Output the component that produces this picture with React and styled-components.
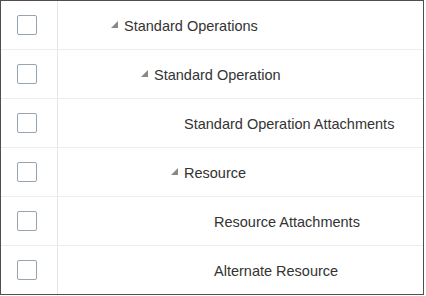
import React from 'react';
import styled, { createGlobalStyle } from 'styled-components';

const Global = createGlobalStyle`
  body {
    margin: 0;
    background: #fff;
    font-family: "Liberation Sans", Arial, sans-serif;
  }
`;

const Frame = styled.div`
  width: 424px;
  height: 295px;
  box-sizing: border-box;
  border: 1px solid #4f4f4f;
  background: #fff;
  overflow: hidden;
`;

const Row = styled.div`
  display: flex;
  height: 49px;
  box-sizing: border-box;
  border-bottom: 1px solid #ececec;
  &:last-child {
    border-bottom: none;
    height: 48px;
  }
`;

const SelectCell = styled.div`
  width: 57px;
  flex: none;
  box-sizing: border-box;
  border-right: 1px solid #e0e6eb;
  display: flex;
  align-items: center;
  padding-left: 16px;
`;

const Checkbox = styled.span`
  width: 20px;
  height: 20px;
  box-sizing: border-box;
  border: 1.5px solid #97a4b0;
  border-radius: 2px;
  background: #fff;
`;

const NameCell = styled.div`
  flex: 1;
  display: flex;
  align-items: center;
  padding-left: ${p => 48 + p.$level * 30}px;
  padding-top: 2px;
  font-size: 14.5px;
  color: #333;
  white-space: nowrap;
`;

const Expander = styled.span`
  width: 18px;
  flex: none;
  display: flex;
  align-items: center;
  padding-left: 5px;
  box-sizing: border-box;
  margin-top: -3px;
`;

const Triangle = () => (
  <svg width="7" height="7" viewBox="0 0 7 7">
    <polygon points="7,0 7,7 0,7" fill="#888" />
  </svg>
);

const rows = [
  { name: 'Standard Operations', level: 0, open: true },
  { name: 'Standard Operation', level: 1, open: true },
  { name: 'Standard Operation Attachments', level: 2 },
  { name: 'Resource', level: 2, open: true },
  { name: 'Resource Attachments', level: 3 },
  { name: 'Alternate Resource', level: 3 },
];

const App = () => (
  <>
    <Global />
    <Frame>
      {rows.map(r => (
        <Row key={r.name}>
          <SelectCell>
            <Checkbox />
          </SelectCell>
          <NameCell $level={r.level}>
            <Expander>{r.open && <Triangle />}</Expander>
            {r.name}
          </NameCell>
        </Row>
      ))}
    </Frame>
  </>
);

export default App;
